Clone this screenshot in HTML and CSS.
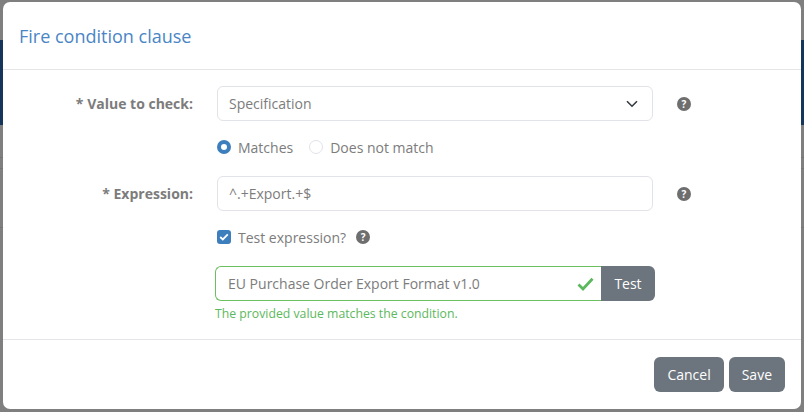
FILE: index.html
```html
<!DOCTYPE html>
<html>
<head>
    <title>Fire condition clause</title>
    <link rel="stylesheet" href="styles.css">
</head>
<body>
    <div class="backdrop">
        <div class="page-band"></div>
        <div class="page-line line-a"></div>
        <div class="page-line line-b"></div>
        <div class="page-line line-c"></div>
    </div>

    <div class="modal">
        <div class="modal-header">
            <h1>Fire condition clause</h1>
        </div>

        <form class="modal-body">
            <div class="form-row">
                <label class="field-label" for="value_to_check">* Value to check:</label>
                <div class="select-wrap">
                    <select id="value_to_check" class="field-control">
                        <option>Specification</option>
                    </select>
                    <svg class="chevron" width="12" height="8" viewBox="0 0 12 8">
                        <path d="M1 1.2 L6 6.2 L11 1.2" fill="none" stroke="#343a40" stroke-width="1.6"/>
                    </svg>
                </div>
                <span class="help-icon">?</span>
            </div>

            <div class="form-row row-options">
                <div class="options">
                    <label class="option">
                        <span class="radio checked"></span> Matches
                    </label>
                    <label class="option">
                        <span class="radio"></span> Does not match
                    </label>
                </div>
            </div>

            <div class="form-row row-expression">
                <label class="field-label" for="expression">* Expression:</label>
                <input id="expression" class="field-control" type="text" value="^.+Export.+$">
                <span class="help-icon">?</span>
            </div>

            <div class="form-row row-check">
                <div class="options">
                    <label class="option">
                        <span class="checkbox">
                            <svg width="10" height="8" viewBox="0 0 10 8">
                                <path d="M1.2 4 L3.8 6.4 L8.8 1.4" fill="none" stroke="#fff" stroke-width="1.8"/>
                            </svg>
                        </span>
                        Test expression?
                    </label>
                    <span class="help-icon">?</span>
                </div>
            </div>

            <div class="form-row row-test">
                <div class="test-block">
                    <div class="test-group">
                        <div class="test-input">
                            <input type="text" value="EU Purchase Order Export Format v1.0">
                            <svg width="17" height="14" viewBox="0 0 17 14">
                                <path d="M1.5 7.5 L6 12 L15.5 1.8" fill="none" stroke="#5cb85c" stroke-width="2.8"/>
                            </svg>
                        </div>
                        <button type="button" class="btn btn-append">Test</button>
                    </div>
                    <div class="valid-feedback">The provided value matches the condition.</div>
                </div>
            </div>
        </form>

        <div class="modal-footer">
            <button type="button" class="btn">Cancel</button>
            <button type="button" class="btn">Save</button>
        </div>
    </div>
</body>
</html>
```

FILE: styles.css
```css
* {
    box-sizing: border-box;
}

html,
body {
    height: 100%;
}

body {
    margin: 0;
    overflow: hidden;
    background-color: #7f7f7f;
    font-family: "Open Sans", sans-serif;
    font-size: 14px;
    color: #7c7c7c;
}

.backdrop {
    position: absolute;
    top: 0;
    left: 0;
    width: 804px;
    height: 412px;
}

.page-band {
    position: absolute;
    top: 40px;
    left: 0;
    width: 100%;
    height: 85px;
    background-color: #15365a;
}

.page-line {
    position: absolute;
    left: 0;
    width: 100%;
    height: 1px;
    background-color: #747474;
}

.line-a {
    top: 157px;
}

.line-b {
    top: 168px;
}

.line-c {
    top: 227px;
}

.modal {
    position: absolute;
    top: 2px;
    left: 3px;
    width: 798px;
    height: 407px;
    display: flex;
    flex-direction: column;
    background-color: #fff;
    border-radius: 7px;
}

.modal-header {
    height: 68px;
    padding-left: 16px;
    display: flex;
    align-items: center;
    border-bottom: 1px solid #e4e5e9;
}

h1 {
    margin: 0;
    font-size: 18px;
    font-weight: 400;
    color: #4a86c5;
}

.modal-body {
    flex: 1;
    padding-top: 16px;
}

.form-row {
    display: grid;
    grid-template-columns: 190px 436px auto;
    column-gap: 24px;
    align-items: center;
}

.row-options {
    margin-top: 16px;
}

.row-expression {
    margin-top: 19px;
}

.row-check {
    margin-top: 16px;
}

.row-test {
    margin-top: 19px;
}

.field-label {
    text-align: right;
    font-weight: 700;
    color: #7c7c7c;
}

.field-control {
    width: 100%;
    height: 35px;
    padding: 0 11px;
    border: 1px solid #e1e3e9;
    border-radius: 6px;
    background-color: #fff;
    font-family: inherit;
    font-size: 14px;
    color: #7c7c7c;
    appearance: none;
}

.select-wrap {
    position: relative;
}

.chevron {
    position: absolute;
    top: 14px;
    right: 15px;
}

.help-icon {
    width: 14px;
    height: 14px;
    display: flex;
    align-items: center;
    justify-content: center;
    border-radius: 50%;
    background-color: #6e6e6e;
    font-size: 10px;
    font-weight: 700;
    color: #fff;
}

.options {
    grid-column: 2;
    display: flex;
    align-items: center;
    height: 20px;
}

.option {
    display: flex;
    align-items: center;
    gap: 7px;
    margin-right: 16px;
}

.row-check .option {
    margin-right: 10px;
}

.radio {
    width: 14px;
    height: 14px;
    border: 1px solid #e1e3e9;
    border-radius: 50%;
}

.radio.checked {
    border: 4px solid #3d7ebd;
}

.checkbox {
    width: 14px;
    height: 14px;
    display: flex;
    align-items: center;
    justify-content: center;
    border-radius: 3px;
    background-color: #3d7ebd;
}

.test-block {
    grid-column: 2;
    margin: 0 -2px;
}

.test-group {
    display: flex;
    height: 35px;
}

.test-input {
    flex: 1;
    display: flex;
    align-items: center;
    padding-right: 7px;
    border: 1px solid #6abf5e;
    border-right: none;
    border-radius: 6px 0 0 6px;
}

.test-input input {
    flex: 1;
    min-width: 0;
    padding: 0 12px;
    border: none;
    outline: none;
    font-family: inherit;
    font-size: 14px;
    color: #7c7c7c;
}

.btn {
    height: 35px;
    padding: 0 13px;
    border: none;
    border-radius: 6px;
    background-color: #6c757d;
    font-family: inherit;
    font-size: 14px;
    color: #fff;
    cursor: pointer;
}

.btn-append {
    width: 54px;
    padding: 0;
    border-radius: 0 6px 6px 0;
}

.valid-feedback {
    margin-top: 4px;
    font-size: 12.25px;
    color: #5cb85c;
}

.modal-footer {
    height: 70px;
    padding: 17px 16px 0 0;
    display: flex;
    justify-content: flex-end;
    gap: 5px;
    border-top: 1px solid #e4e5e9;
}
```
